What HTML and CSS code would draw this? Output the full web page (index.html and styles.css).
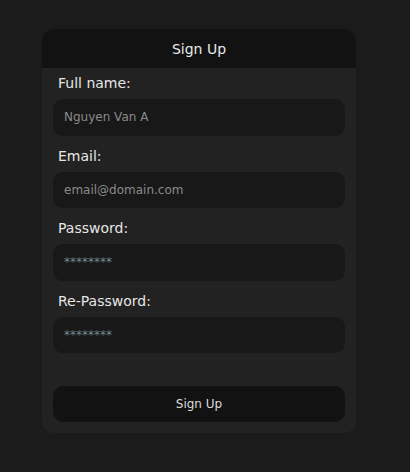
FILE: index.html
```html
<!DOCTYPE html>
<html>
<head>
<meta charset="utf-8">
<link rel="stylesheet" href="styles.css">
</head>
<body>
<div class="page">
  <form class="card">
    <div class="card-header">Sign Up</div>
    <div class="card-body">
      <label class="label first">Full name:</label>
      <div class="input">Nguyen Van A</div>
      <label class="label">Email:</label>
      <div class="input">email@domain.com</div>
      <label class="label">Password:</label>
      <div class="input pw">********</div>
      <label class="label">Re-Password:</label>
      <div class="input pw">********</div>
      <div class="button">Sign Up</div>
    </div>
  </form>
</div>
</body>
</html>
```

FILE: styles.css
```css
html, body {
  margin: 0;
  padding: 0;
  background: #1b1b1b;
  font-family: "DejaVu Sans", sans-serif;
}
.page {
  padding: 29px 0 0 42px;
  height: 443px;
}
.card {
  width: 314px;
  background: #222222;
  border-radius: 12px;
  overflow: hidden;
  display: flex;
  flex-direction: column;
}
.card-header {
  height: 39px;
  background: #121212;
  color: #e8e8e8;
  font-size: 14px;
  display: flex;
  align-items: center;
  justify-content: center;
}
.card-body {
  display: flex;
  flex-direction: column;
  padding: 0 11px 11px;
}
.label {
  color: #e6e6e6;
  font-size: 14px;
  line-height: 18px;
  padding-left: 5px;
  margin: 11px 0 7px;
}
.label.first {
  margin-top: 6px;
}
.input {
  height: 36.6px;
  border-radius: 10px;
  background: #181818;
  color: #8a8a8a;
  font-size: 12px;
  display: flex;
  align-items: center;
  padding-left: 11px;
}
.input.pw {
  color: #74868d;
}
.button {
  margin-top: 32.5px;
  height: 36px;
  border-radius: 10px;
  background: #121212;
  color: #dcdcdc;
  font-size: 12px;
  display: flex;
  align-items: center;
  justify-content: center;
}
```
